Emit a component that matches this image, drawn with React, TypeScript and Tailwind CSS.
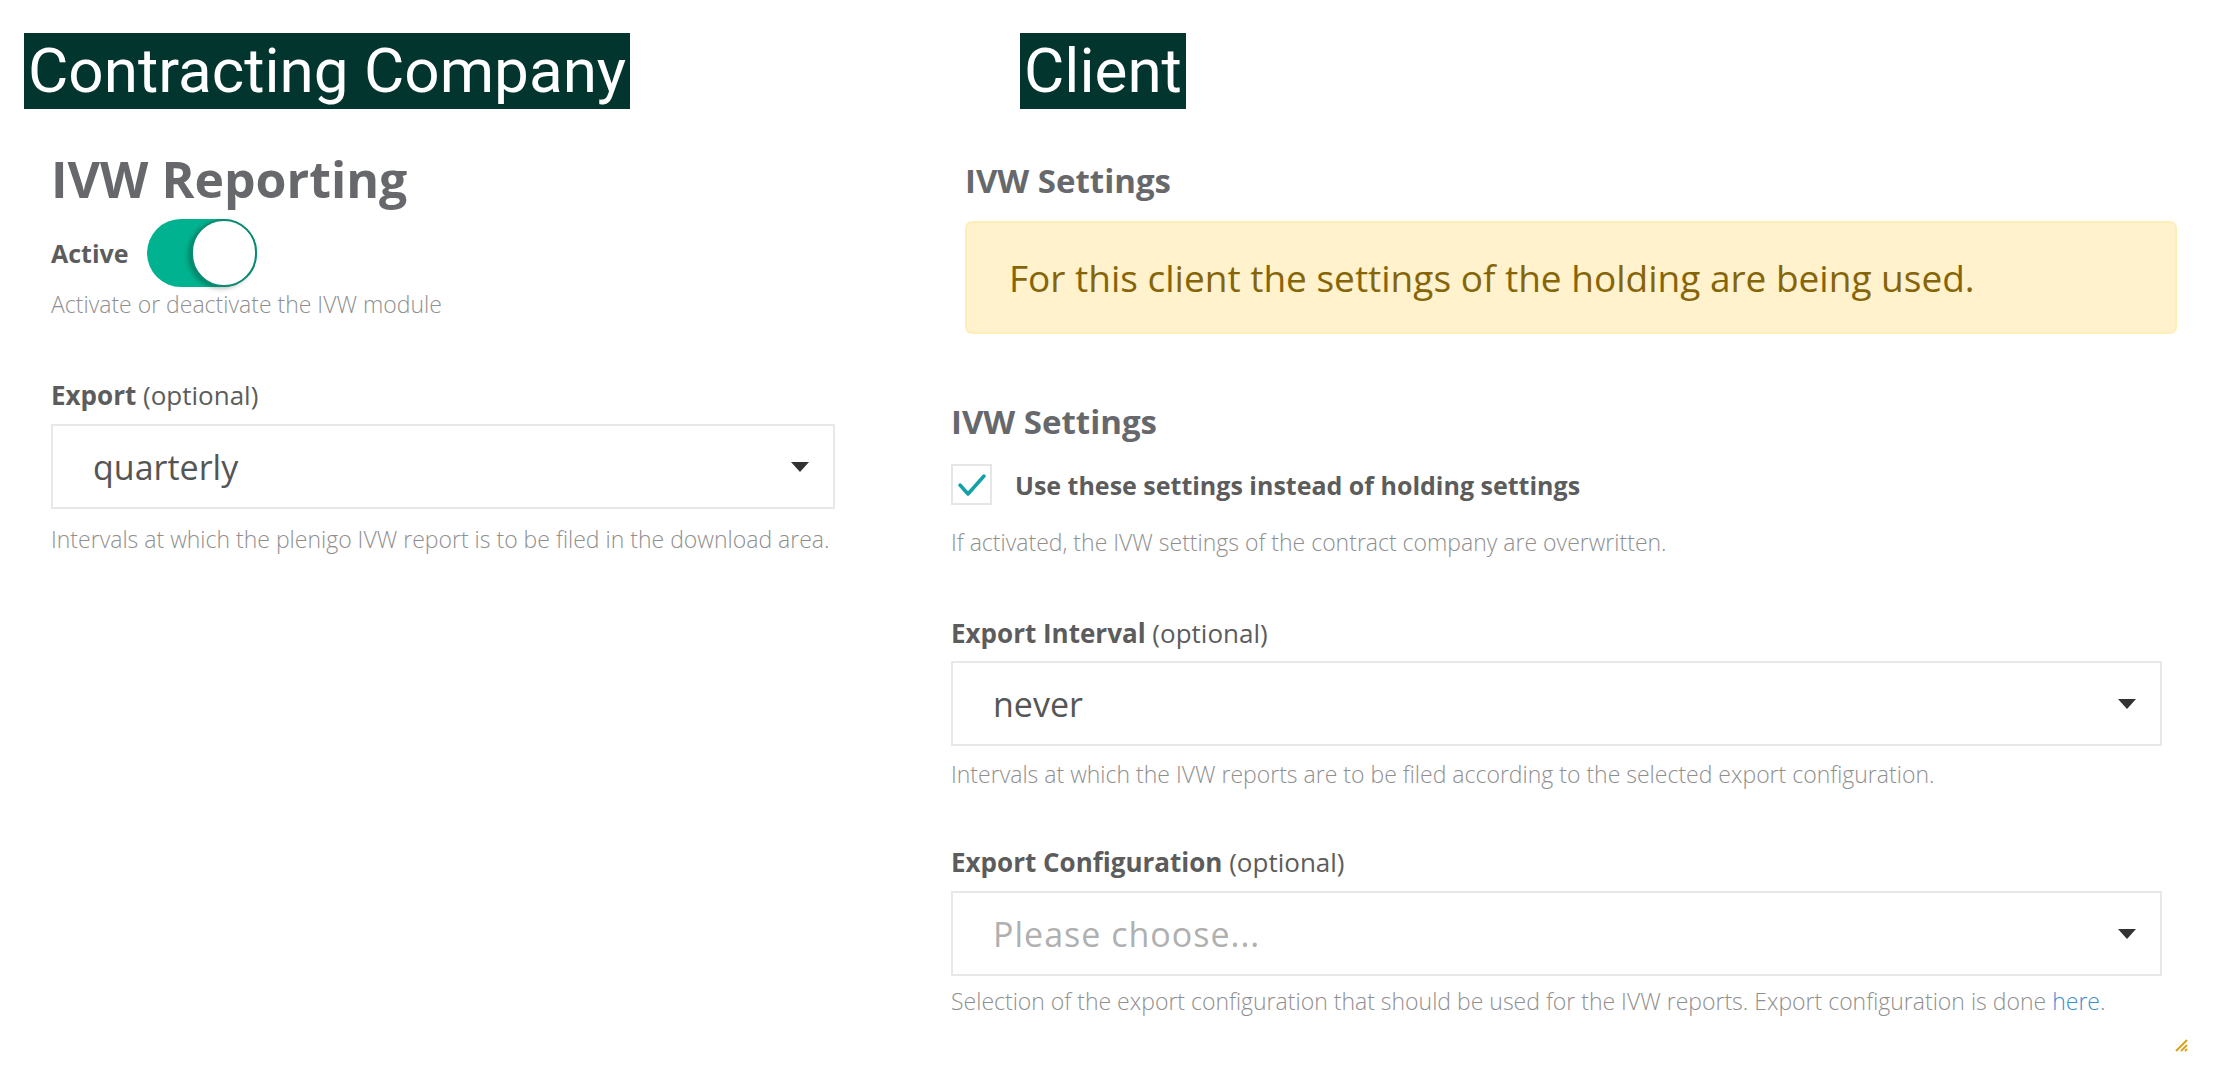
import React from "react";

const Caret = () => (
  <svg width="18" height="10" viewBox="0 0 18 10" className="shrink-0">
    <path d="M0 0 L18 0 L9 10 Z" fill="#333333" />
  </svg>
);

function Select({ value, placeholder }: { value: string; placeholder?: boolean }) {
  return (
    <div className="flex h-[85px] items-center justify-between border-2 border-[#e8e8e8] bg-white pl-[40px] pr-[24px]">
      <span
        className={
          "text-[34px] leading-[40px] " +
          (placeholder ? "tracking-[1px] text-[#b0b0b0]" : "text-[#555555]")
        }
      >
        {value}
      </span>
      <Caret />
    </div>
  );
}

function Label({ bold, rest }: { bold: string; rest?: string }) {
  return (
    <div className="text-[26px] leading-[32px] text-[#5c5c5c]">
      <span className="font-bold">{bold}</span>
      {rest ? <span className="font-normal"> {rest}</span> : null}
    </div>
  );
}

function Help({ children }: { children: React.ReactNode }) {
  return <div className="text-[23px] font-light leading-[30px] text-[#8f8f8f]">{children}</div>;
}

function Tag({ text }: { text: string }) {
  return (
    <div
      className="inline-flex h-[76px] items-center bg-[#02352d] px-[4px] text-[62px] leading-[76px] text-white"
      style={{ fontFamily: "Roboto, 'Liberation Sans', sans-serif" }}
    >
      {text}
    </div>
  );
}

export default function App() {
  return (
    <div
      className="relative flex h-[1081px] w-[2222px] overflow-hidden bg-white"
      style={{ fontFamily: "'Open Sans', 'Noto Sans', sans-serif" }}
    >
      {/* Left column */}
      <div className="flex w-[951px] shrink-0 flex-col pl-[24px] pt-[33px]">
        <div>
          <Tag text="Contracting Company" />
        </div>
        <div className="ml-[27px] flex w-[784px] flex-col">
          <h1 className="mt-[40px] text-[50px] font-bold leading-[60px] text-[#67686b]">IVW Reporting</h1>
          <div className="mt-[10px] flex h-[68px] items-center gap-[18px]">
            <span className="text-[25px] font-bold leading-[32px] text-[#5c5c5c]">Active</span>
            <div className="relative h-[68px] w-[110px] rounded-full bg-[#00b28f]">
              <div className="absolute right-0 top-0 h-[68px] w-[66px] rounded-full border-2 border-[#0b8a72] bg-white shadow-[-3px_2px_4px_rgba(0,0,0,0.25)]" />
            </div>
          </div>
          <div className="mt-[2px]">
            <Help>Activate or deactivate the IVW module</Help>
          </div>
          <div className="mt-[60px]">
            <Label bold="Export" rest="(optional)" />
          </div>
          <div className="mt-[13px]">
            <Select value="quarterly" />
          </div>
          <div className="mt-[15px]">
            <Help>Intervals at which the plenigo IVW report is to be filed in the download area.</Help>
          </div>
        </div>
      </div>

      {/* Right column */}
      <div className="flex w-[1211px] shrink-0 flex-col pt-[33px]">
        <div className="ml-[69px]">
          <Tag text="Client" />
        </div>
        <div className="ml-[14px] mt-[52px] text-[33px] font-bold leading-[40px] text-[#67686b]">IVW Settings</div>
        <div className="ml-[14px] mt-[20px] flex h-[113px] w-[1212px] items-center rounded-[7px] border-2 border-[#ffeeb8] bg-[#fff2cc] pl-[42px]">
          <span className="text-[37px] leading-[44px] text-[#86650a]">
            For this client the settings of the holding are being used.
          </span>
        </div>
        <div className="mt-[68px] text-[33px] font-bold leading-[40px] text-[#67686b]">IVW Settings</div>
        <div className="mt-[22px] flex h-[41px] items-center gap-[23px]">
          <div className="flex h-[41px] w-[41px] items-center justify-center border-2 border-[#e6e6e6] bg-white">
            <svg width="30" height="24" viewBox="0 0 30 24">
              <path d="M3 12 L11 21 L27 3" fill="none" stroke="#13a0a8" strokeWidth="3.5" strokeLinecap="round" strokeLinejoin="round" />
            </svg>
          </div>
          <span className="text-[25px] font-bold leading-[32px] text-[#5c5c5c]">
            Use these settings instead of holding settings
          </span>
        </div>
        <div className="mt-[22px]">
          <Help>If activated, the IVW settings of the contract company are overwritten.</Help>
        </div>
        <div className="mt-[60px]">
          <Label bold="Export Interval" rest="(optional)" />
        </div>
        <div className="mt-[12px]">
          <Select value="never" />
        </div>
        <div className="mt-[13px]">
          <Help>Intervals at which the IVW reports are to be filed according to the selected export configuration.</Help>
        </div>
        <div className="mt-[57px]">
          <Label bold="Export Configuration" rest="(optional)" />
        </div>
        <div className="mt-[13px]">
          <Select value="Please choose..." placeholder />
        </div>
        <div className="mt-[10px]">
          <Help>
            Selection of the export configuration that should be used for the IVW reports. Export configuration is done{" "}
            <span className="text-[#3a8ed0]">here</span>.
          </Help>
        </div>
      </div>

      {/* corner handle */}
      <svg className="absolute left-[2172px] top-[1036px]" width="16" height="16" viewBox="0 0 16 16">
        <path d="M15 4 L4 15" stroke="#d9a21b" strokeWidth="2" />
        <path d="M15 9 L9 15" stroke="#d9a21b" strokeWidth="2" />
        <path d="M15 13 L13 15" stroke="#d9a21b" strokeWidth="2" />
      </svg>
    </div>
  );
}
